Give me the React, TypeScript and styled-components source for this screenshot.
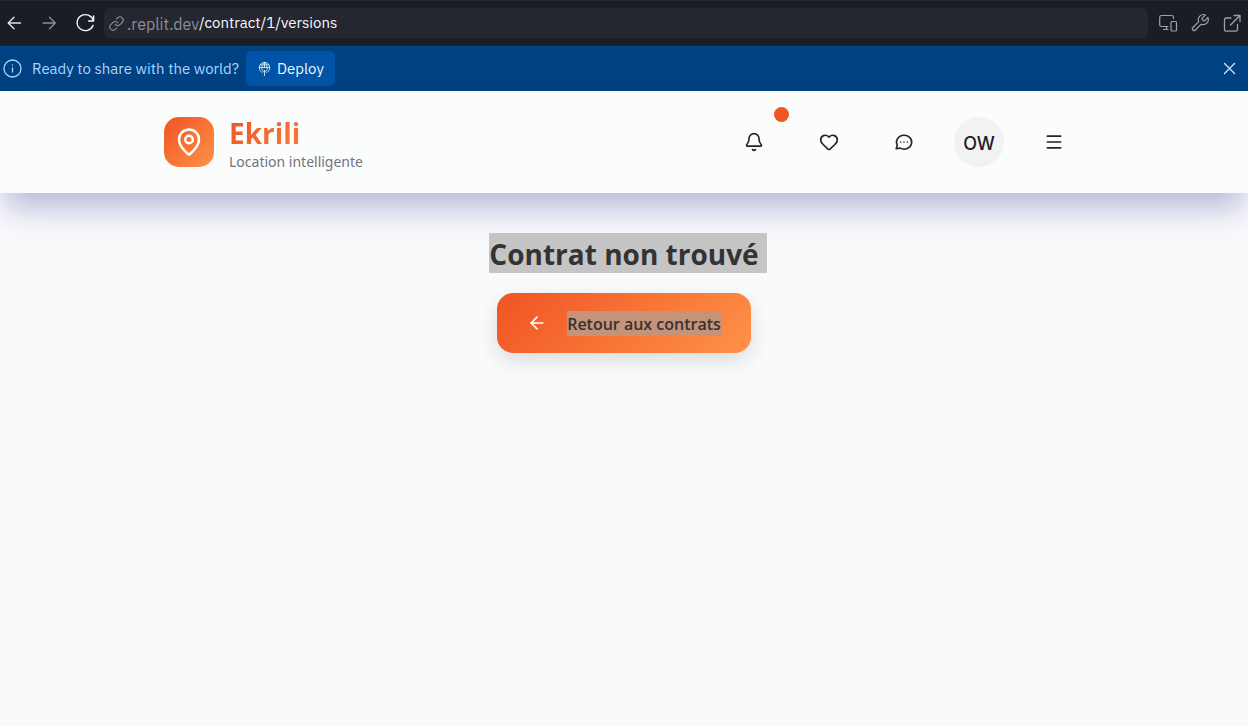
import React from "react";
import styled, { createGlobalStyle, css } from "styled-components";
import { ArrowLeft, Bell, Heart, MapPin, Menu } from "lucide-react";

const GlobalStyle = createGlobalStyle`
  *, *::before, *::after { box-sizing: border-box; }
  body { margin: 0; background: #f9fafc; font-family: "Open Sans", "Noto Sans", sans-serif; }
  button, input { font: inherit; }
  h1, p { margin: 0; }
`;

const chromeFont = css`
  font-family: "IBM Plex Sans", "Noto Sans", sans-serif;
  font-size: 15px;
  line-height: 20px;
`;

const Toolbar = styled.nav`
  ${chromeFont}
  display: flex;
  align-items: center;
  height: 46px;
  padding: 0 6px 0 4px;
  background: #1b1d26;
  border-top: 1px solid #262934;
  border-bottom: 1px solid #20222c;
`;

const ToolGroup = styled.div<{ $gap: number }>`
  display: flex;
  align-items: center;
  gap: ${(p) => p.$gap}px;
`;

const ToolButton = styled.button<{ $tone: string }>`
  display: flex;
  padding: 0;
  border: 0;
  background: none;
  color: ${(p) => p.$tone};
  cursor: pointer;
`;

const AddressBar = styled.label`
  display: flex;
  align-items: center;
  flex: 1;
  height: 30px;
  margin: 0 10px 0 8px;
  padding: 0 5px;
  border-radius: 6px;
  background: #242630;
  color: #8b8e99;
`;

const Domain = styled.span`
  margin-left: 3px;
  padding-top: 2px;
  font-size: 16px;
`;

const PathInput = styled.input`
  flex: 1;
  min-width: 0;
  padding: 0;
  border: 0;
  outline: 0;
  background: none;
  color: #f5f9fc;
`;

const Banner = styled.section`
  ${chromeFont}
  display: flex;
  align-items: center;
  height: 45px;
  padding: 0 11px 0 3px;
  background: #004182;
  color: #a9d6ff;
`;

const BannerText = styled.p`
  margin: 0 7px 0 10px;
`;

const DeployButton = styled.button`
  display: flex;
  align-items: center;
  gap: 5px;
  height: 35px;
  padding: 0 11px;
  border: 0;
  border-radius: 5px;
  background: #0053a6;
  color: #f0f7ff;
  cursor: pointer;
`;

const CloseButton = styled(ToolButton)`
  margin-left: auto;
`;

const Header = styled.header`
  position: relative;
  padding: 21px 24px;
  background: #fbfdfc;
  box-shadow: 0 20px 32px -5px rgba(70, 70, 150, 0.36);
`;

const HeaderInner = styled.div`
  display: flex;
  align-items: center;
  justify-content: space-between;
  max-width: 920px;
  height: 60px;
  margin: 0 auto;
`;

const Brand = styled.a`
  display: flex;
  align-items: center;
  gap: 15px;
  text-decoration: none;
`;

const BrandMark = styled.span`
  display: grid;
  place-items: center;
  width: 50px;
  height: 50px;
  border-radius: 15px;
  background: linear-gradient(135deg, #f05423, #ff9248);
  color: #fff;
`;

const BrandText = styled.span`
  display: flex;
  flex-direction: column;
  padding-top: 4px;
`;

const BrandName = styled.span`
  background: linear-gradient(135deg, #f05423, #ff9248);
  background-clip: text;
  color: transparent;
  font-size: 28px;
  font-weight: 700;
  line-height: 36px;
`;

const Tagline = styled.span`
  color: #73737d;
  font-family: "Noto Sans", sans-serif;
  font-size: 14px;
  line-height: 22px;
`;

const Actions = styled.div`
  display: flex;
  gap: 15px;
`;

const ActionButton = styled.button`
  position: relative;
  display: grid;
  place-items: center;
  width: 60px;
  height: 60px;
  padding: 0;
  border: 0;
  background: none;
  color: #24242e;
  cursor: pointer;
`;

const Badge = styled.span`
  position: absolute;
  top: -5px;
  right: -5px;
  width: 15px;
  height: 15px;
  border-radius: 50%;
  background: #f05423;
`;

const Avatar = styled.span`
  display: grid;
  place-items: center;
  width: 50px;
  height: 50px;
  padding-top: 2px;
  border-radius: 50%;
  background: #f2f2f2;
  color: #1c1c24;
  font-family: Inter, sans-serif;
  font-size: 18px;
  font-weight: 500;
`;

const Main = styled.main`
  display: flex;
  flex-direction: column;
  align-items: center;
  gap: 20px;
  padding: 40px 24px;
`;

const Title = styled.h1`
  position: relative;
  color: #333;
  font-size: 28px;
  font-weight: 700;
  line-height: 40px;
`;

const TitleSelection = styled.span`
  display: block;
  height: 40px;
  margin-right: -8px;
  padding: 1px 8px 0 0;
  background: #c5c5c5;
`;

const BackButton = styled.button`
  position: relative;
  display: flex;
  align-items: center;
  gap: 20px;
  height: 60px;
  padding: 0 30px;
  border: 0;
  border-radius: 16px;
  background: linear-gradient(135deg, #f05423, #ff9248);
  box-shadow: 0 8px 20px rgba(0, 0, 0, 0.12);
  color: #fff;
  font-size: 16px;
  font-weight: 600;
  line-height: 24px;
  cursor: pointer;
`;

const LabelSelection = styled.span`
  padding-top: 1px;
  background: #c59379;
  color: #333;
`;

type DrawingProps = { size: number; width?: number; children: React.ReactNode };

const Drawing = ({ size, width = 1, children }: DrawingProps) => (
  <svg
    width={size}
    height={size}
    viewBox={`0 0 ${size} ${size}`}
    fill="none"
    stroke="currentColor"
    strokeWidth={width}
    strokeLinecap="round"
    strokeLinejoin="round"
    aria-hidden="true"
  >
    {children}
  </svg>
);

export default function App() {
  return (
    <>
      <GlobalStyle />
      <Toolbar aria-label="Navigation">
        <ToolGroup $gap={15}>
          <ToolButton $tone="#dfe1e8" aria-label="Back">
            <Drawing size={20} width={1.4}>
              <path d="M16.5 10H4.2M10 4.2 4.2 10l5.8 5.8" />
            </Drawing>
          </ToolButton>
          <ToolButton $tone="#8b8e99" aria-label="Forward">
            <Drawing size={20} width={1.4}>
              <path d="M4 10h12.3M10.5 4.2l5.8 5.8-5.8 5.8" />
            </Drawing>
          </ToolButton>
          <ToolButton $tone="#f5f9fc" aria-label="Reload">
            <Drawing size={22} width={1.4}>
              <path d="M19.6 4v5h-5M19.3 8.700A8.2 8 0 1 0 19 13.500" />
            </Drawing>
          </ToolButton>
        </ToolGroup>
        <AddressBar>
          <Drawing size={15} width={1.1}>
            <path d="M6.2 8.3a3.2 3.2 0 0 0 4.8.4l2.2-2.2a3.2 3.2 0 0 0-4.6-4.6L7.4 3.1M8.8 6.8A3.2 3.2 0 0 0 4 6.4L1.8 8.6a3.2 3.2 0 0 0 4.6 4.6L7.6 12" />
          </Drawing>
          <Domain>.replit.dev</Domain>
          <PathInput aria-label="Path" defaultValue="/contract/1/versions" />
        </AddressBar>
        <ToolGroup $gap={12}>
          <ToolButton $tone="#9da0ab" aria-label="Responsive view">
            <Drawing size={20} width={1.2}>
              <path d="M15.5 5.5V4A1.8 1.8 0 0 0 13.7 2.5H3.5A1.8 1.8 0 0 0 1.7 4.3v7.4a1.8 1.8 0 0 0 1.8 1.8H10M8.5 13.5v3M5.5 16.5H10" />
              <rect x="13" y="8.5" width="5.5" height="9.5" rx="1" />
            </Drawing>
          </ToolButton>
          <ToolButton $tone="#9da0ab" aria-label="Developer tools">
            <Drawing size={20} width={1.2}>
              <path d="M12.2 5.2a.85.85 0 0 0 0 1.2l1.3 1.3a.85.85 0 0 0 1.2 0l3.2-3.2a5.1 5.1 0 0 1-6.7 6.7l-5.8 5.8a1.75 1.75 0 0 1-2.5-2.5l5.800-5.800a5.100 5.100 0 0 1 6.700-6.700z" />
            </Drawing>
          </ToolButton>
          <ToolButton $tone="#9da0ab" aria-label="Open in new tab">
            <Drawing size={20} width={1.3}>
              <path d="M12 2.5h6v6M18 2.5 8.5 12M15.5 11.5v5a1.700 1.700 0 0 1-1.700 1.700H4.200a1.700 1.700 0 0 1-1.700-1.700V6.700A1.700 1.700 0 0 1 4.200 5H9" />
            </Drawing>
          </ToolButton>
        </ToolGroup>
      </Toolbar>
      <Banner>
        <Drawing size={19} width={1.3}>
          <circle cx="9.5" cy="9.5" r="8.5" />
          <path d="M9.5 9v4M9.5 6v.1" />
        </Drawing>
        <BannerText>Ready to share with the world?</BannerText>
        <DeployButton>
          <Drawing size={15} width={0.8}>
            <path d="M4 10.700A5.300 5.300 0 1 1 11 10.700M2.300 6.500h10.400M5.300 9.500C4.200 6 5.500 2.500 7.500 1.400M9.700 9.500c1.100-3.500-.2-7-2.200-8.100M3.300 3.900h8.400M7.500 1.400V6.500M7.500 9.500V14.500M5.200 11.600l2.300-2.300 2.300 2.300" />
          </Drawing>
          Deploy
        </DeployButton>
        <CloseButton $tone="#c5e3ff" aria-label="Dismiss">
          <Drawing size={15} width={1.4}>
            <path d="m2.500 2.500 10 10M12.500 2.500l-10 10" />
          </Drawing>
        </CloseButton>
      </Banner>
      <Header>
        <HeaderInner>
          <Brand href="/">
            <BrandMark>
              <MapPin size={30} strokeWidth={2} />
            </BrandMark>
            <BrandText>
              <BrandName>Ekrili</BrandName>
              <Tagline>Location intelligente</Tagline>
            </BrandText>
          </Brand>
          <Actions>
            <ActionButton aria-label="Notifications">
              <Bell size={20} strokeWidth={2} />
              <Badge />
            </ActionButton>
            <ActionButton aria-label="Favoris">
              <Heart size={20} strokeWidth={2} />
            </ActionButton>
            <ActionButton aria-label="Messages">
              <Drawing size={20} width={1.6}>
                <path d="M2.200 16.800 3.300 13.200A7.600 6.900 0 1 1 6.300 16.100Z" />
                <path d="M6.700 10h.01M10 10h.01M13.300 10h.01" />
              </Drawing>
            </ActionButton>
            <ActionButton aria-label="Profil">
              <Avatar>OW</Avatar>
            </ActionButton>
            <ActionButton aria-label="Menu">
              <Menu size={20} strokeWidth={2} />
            </ActionButton>
          </Actions>
        </HeaderInner>
      </Header>
      <Main>
        <Title>
          <TitleSelection>Contrat non trouvé</TitleSelection>
        </Title>
        <BackButton>
          <ArrowLeft size={20} strokeWidth={2} />
          <LabelSelection>Retour aux contrats</LabelSelection>
        </BackButton>
      </Main>
    </>
  );
}
